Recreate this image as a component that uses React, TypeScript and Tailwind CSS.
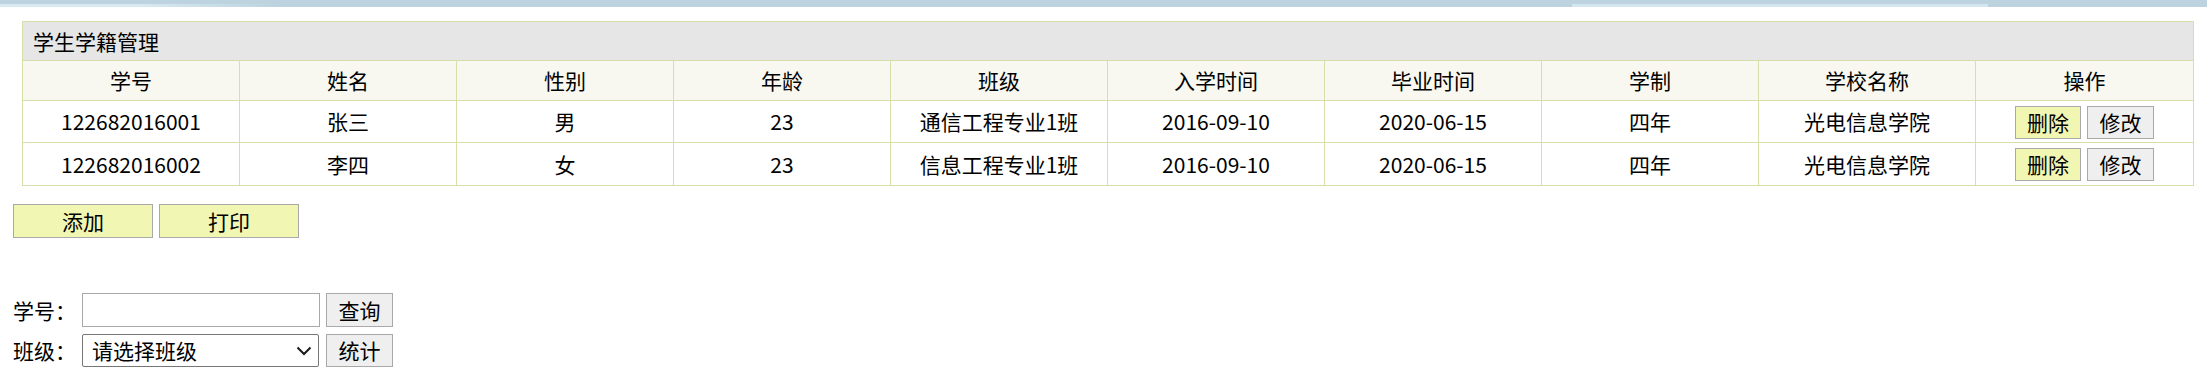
import React from "react";

const COLUMNS = ["学号", "姓名", "性别", "年龄", "班级", "入学时间", "毕业时间", "学制", "学校名称", "操作"];

const STUDENTS = [
  ["122682016001", "张三", "男", "23", "通信工程专业1班", "2016-09-10", "2020-06-15", "四年", "光电信息学院"],
  ["122682016002", "李四", "女", "23", "信息工程专业1班", "2016-09-10", "2020-06-15", "四年", "光电信息学院"],
];

const cell = "flex items-center justify-center border-r border-[#d6dea9] last:border-r-0";

export default function App() {
  return (
    <div className="min-h-[385px] bg-white text-[21px] text-black font-['Noto_Sans_CJK_SC',sans-serif] leading-none">
      {/* top strip */}
      <div className="flex h-[7px] flex-col bg-[#bdd4e0]">
        <div className="h-[4px]" />
        <div className="flex h-[3px]">
          <div className="w-[278px] bg-gradient-to-r from-[#d8e9f1] via-[#d8e9f1] to-[#bdd4e0]" />
          <div className="w-[1294px]" />
          <div className="w-[416px] bg-[#d4e6ef]" />
        </div>
      </div>

      {/* table */}
      <div className="ml-[22px] mt-[14px] w-[2172px] border border-[#d6dea9]">
        <div className="flex h-[39px] items-center border-b border-[#d6dea9] bg-[#e6e6e6] pl-[10px]">
          学生学籍管理
        </div>
        <div className="grid h-[40px] grid-cols-10 border-b border-[#d6dea9] bg-[#f8f8f0]">
          {COLUMNS.map((c) => (
            <div key={c} className={cell}>
              {c}
            </div>
          ))}
        </div>
        {STUDENTS.map((s, i) => (
          <div
            key={s[0]}
            className={`grid h-[42px] grid-cols-10 ${i < STUDENTS.length - 1 ? "border-b border-[#d6dea9]" : "h-[41px]"}`}
          >
            {s.map((v, j) => (
              <div key={j} className={cell}>
                {v}
              </div>
            ))}
            <div className={`${cell} gap-[6px] pt-[1px]`}>
              <button className="h-[33px] w-[66px] border border-[#a9a9a9] bg-[#f1f6b3]">删除</button>
              <button className="h-[33px] w-[67px] border border-[#a9a9a9] bg-[#efefef]">修改</button>
            </div>
          </div>
        ))}
      </div>

      {/* actions */}
      <div className="ml-[13px] mt-[18px] flex gap-[6px]">
        <button className="h-[34px] w-[140px] border border-[#a9a9a9] bg-[#f1f6b3]">添加</button>
        <button className="h-[34px] w-[140px] border border-[#a9a9a9] bg-[#f1f6b3]">打印</button>
      </div>

      {/* search */}
      <div className="ml-[13px] mt-[55px] flex flex-col gap-[7px]">
        <div className="flex items-center">
          <span className="w-[69px]">学号：</span>
          <div className="h-[34px] w-[238px] border border-[#a9a9a9] bg-white" />
          <button className="ml-[6px] h-[34px] w-[67px] border border-[#a9a9a9] bg-[#efefef]">查询</button>
        </div>
        <div className="flex items-center">
          <span className="w-[69px]">班级：</span>
          <div className="flex h-[33px] w-[237px] items-center justify-between rounded-[2px] border border-[#767676] bg-white pl-[9px] pr-[6px]">
            <span>请选择班级</span>
            <svg width="16" height="10" viewBox="0 0 16 10" fill="none">
              <path d="M1.5 1.5 L8 8 L14.5 1.5" stroke="#1a1a1a" strokeWidth="2" />
            </svg>
          </div>
          <button className="ml-[7px] h-[33px] w-[67px] border border-[#a9a9a9] bg-[#efefef]">统计</button>
        </div>
      </div>
    </div>
  );
}
